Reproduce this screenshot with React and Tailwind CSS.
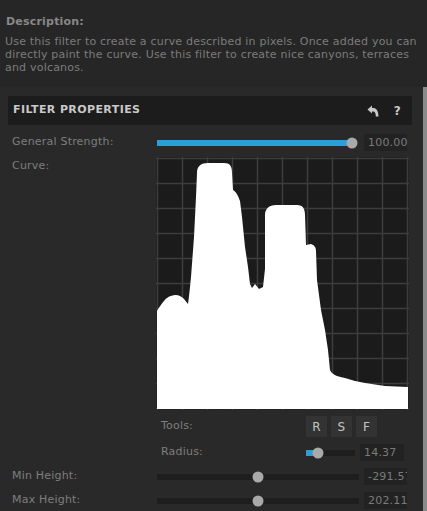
import React from "react";

const CURVE =
  "M1 154 C6 146 10 140 15 139 C20 137 24 138 28 142 L32 147 C33 140 34 130 35 120 L38 80 L40 40 L41 16 C41 9 45 6 52 6 L68 6 C74 6 76 9 76 16 L77 33 C80 35 82 38 84 44 L86 60 L89 90 L92 110 L94 127 L96 131 L99 127 L103 132 L107 130 L109 112 L109 58 C109 52 113 48 120 48 L141 48 C147 48 149 52 149 58 L150 88 L155 87 C158 88 160 90 160 94 L161 123 L165 153 L169 173 L172 193 L174 213 C176 217 179 219 189 221 L199 224 L209 226 L229 229 L252 230 L252 252 L1 252 Z";

const Slider = ({ fill, knob, width, blue }) => (
  <div className="relative h-[6px] bg-[#1e1e1e]" style={{ width }}>
    {blue && <div className="absolute left-0 top-0 h-full bg-[#2a9fd6]" style={{ width: fill }} />}
    <div
      className="absolute top-1/2 h-[11px] w-[11px] -translate-x-1/2 -translate-y-1/2 rounded-full bg-[#a9a9a9]"
      style={{ left: knob }}
    />
  </div>
);

const ValueBox = ({ value, w = "w-[43px]", align = "text-right" }) => (
  <div className={`${w} h-[17px] overflow-hidden whitespace-nowrap bg-[#222222] px-[4px] text-[11px] leading-[17px] text-[#7b7b7b] ${align}`}>
    {value}
  </div>
);

const CurveGraph = () => {
  const lines = Array.from({ length: 11 }, (_, i) => 1.5 + i * 25);
  return (
    <svg width="253" height="253" viewBox="0 0 253 253" className="block">
      <rect x="0" y="0" width="253" height="253" fill="#1b1b1b" />
      {lines.map((p) => (
        <g key={p}>
          <line x1={p} y1="0" x2={p} y2="253" stroke="#3d3d3d" strokeWidth="1.5" />
          <line x1="0" y1={p} x2="253" y2={p} stroke="#3d3d3d" strokeWidth="1.5" />
        </g>
      ))}
      <path d={CURVE} fill="#ffffff" />
    </svg>
  );
};

export default function App() {
  return (
    <div
      className="w-[427px] h-[511px] overflow-hidden bg-[#292929] text-[11px] tracking-[0.2px]"
      style={{ fontFamily: '"DejaVu Sans", Verdana, sans-serif' }}
    >
      {/* description */}
      <div className="h-[87px] bg-[#262626] px-[5px] pt-[15px]">
        <div className="pl-[1px] font-bold text-[#888888] leading-[14px]">Description:</div>
        <p className="mt-[6px] leading-[13px] text-[#7c7c7c]">
          Use this filter to create a curve described in pixels. Once added you can
          directly paint the curve. Use this filter to create nice canyons, terraces
          and volcanos.
        </p>
      </div>

      <div className="flex h-[424px]">
        <div className="flex-1 pl-[8px] pr-[11px] pt-[9px]">
          {/* header */}
          <div className="flex h-[29px] items-center justify-between bg-[#1c1c1c] pl-[5px] pr-[11px]">
            <span className="font-bold tracking-[0.4px] text-[#c9c9c9]">FILTER PROPERTIES</span>
            <div className="flex items-center gap-[15px]">
              <svg width="12" height="12" viewBox="0 0 12 12">
                <path d="M5 0.5 L0.5 4.5 L5 8.5 L5 6.5 L6 6.5 C8 6.5 8.8 8 8.8 11.5 L11.5 11.5 C11.5 5.5 9 3 6 3 L5 3 Z" fill="#c9c9c9" />
              </svg>
              <span className="font-bold text-[12px] text-[#c9c9c9]">?</span>
            </div>
          </div>

          {/* general strength */}
          <div className="mt-[9px] flex h-[17px] items-center">
            <span className="w-[149px] pl-[4px] text-[#7e7e7e]">General Strength:</span>
            <Slider width="195px" fill="195px" knob="195px" blue />
            <div className="ml-[12px]">
              <ValueBox value="100.00" />
            </div>
          </div>

          {/* curve */}
          <div className="mt-[6px] flex">
            <span className="w-[148px] pl-[4px] pt-[2px] leading-[13px] text-[#7e7e7e]">Curve:</span>
            <div>
              <CurveGraph />
              <div className="mt-[6px] flex h-[21px] items-center">
                <span className="w-[150px] pl-[5px] text-[#7e7e7e]">Tools:</span>
                <div className="flex gap-[4px]">
                  {["R", "S", "F"].map((t) => (
                    <div key={t} className="flex h-[21px] w-[21px] items-center justify-center bg-[#333333] text-[12px] text-[#c4c4c4]">
                      {t}
                    </div>
                  ))}
                </div>
              </div>
              <div className="mt-[7px] flex h-[17px] items-center">
                <span className="w-[150px] pl-[5px] text-[#7e7e7e]">Radius:</span>
                <Slider width="49px" fill="12px" knob="12px" blue />
                <div className="ml-[5px]">
                  <ValueBox value="14.37" w="w-[44px]" align="text-left" />
                </div>
              </div>
            </div>
          </div>

          {/* min height */}
          <div className="mt-[7px] flex h-[17px] items-center">
            <span className="w-[149px] pl-[4px] text-[#7e7e7e]">Min Height:</span>
            <Slider width="202px" knob="101px" />
            <div className="ml-[5px]">
              <ValueBox value="-291.57" align="text-left" />
            </div>
          </div>

          {/* max height */}
          <div className="mt-[7px] flex h-[17px] items-center">
            <span className="w-[149px] pl-[4px] text-[#7e7e7e]">Max Height:</span>
            <Slider width="202px" knob="101px" />
            <div className="ml-[5px]">
              <ValueBox value="202.11" />
            </div>
          </div>
        </div>
        <div className="w-[4px] bg-[#8a8a8a]" />
      </div>
    </div>
  );
}
